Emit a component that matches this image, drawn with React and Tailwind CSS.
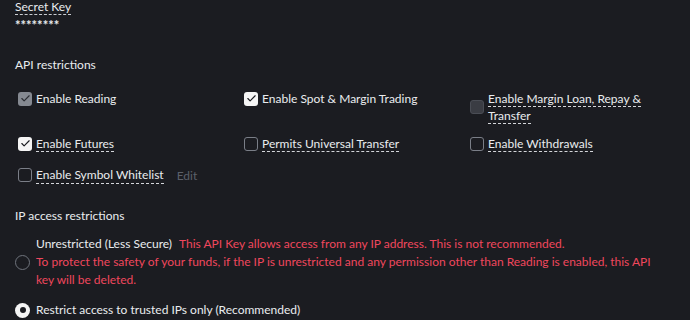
import { Check } from "lucide-react";

const permissions = [
  { label: "Enable Reading", state: "locked" },
  { label: "Enable Spot & Margin Trading", state: "on" },
  { label: "Enable Margin Loan, Repay & Transfer", state: "disabled", dashed: true, center: true },
  { label: "Enable Futures", state: "on", dashed: true },
  { label: "Permits Universal Transfer", state: "off", dashed: true },
  { label: "Enable Withdrawals", state: "off", dashed: true },
];

function Box({ state }) {
  if (state === "locked")
    return (
      <span className="flex h-[14px] w-[14px] shrink-0 items-center justify-center rounded-[3px] bg-[#858991]">
        <Check size={11} strokeWidth={2.5} className="text-[#2b2d33]" />
      </span>
    );
  if (state === "on")
    return (
      <span className="flex h-[14px] w-[14px] shrink-0 items-center justify-center rounded-[3px] bg-[#f5f5f5]">
        <Check size={11} strokeWidth={2.5} className="text-[#1b1c21]" />
      </span>
    );
  if (state === "disabled")
    return <span className="h-[14px] w-[14px] shrink-0 rounded-[3px] border border-[#4a4d55] bg-[#3a3c43]" />;
  return <span className="h-[14px] w-[14px] shrink-0 rounded-[3px] border border-[#7a7e87]" />;
}

function Label({ children, dashed }) {
  if (!dashed) return <span>{children}</span>;
  return <span className="border-b border-dashed border-[#d4d6da]">{children}</span>;
}

export default function App() {
  return (
    <div className="h-[320px] w-[690px] overflow-hidden bg-[#1b1c21] pl-[15px] text-[12px] text-[#eaecef] font-['Lato',_'Open_Sans',_sans-serif]">
      <div className="-mt-[1px] leading-[15px]">
        <span className="border-b border-dashed border-[#c9ccd1]">Secret Key</span>
      </div>
      <div className="mt-[4px] text-[13px] font-bold leading-[14px]">********</div>

      <div className="mt-[24px] leading-[18px]">API restrictions</div>

      <div className="mt-[16px] ml-[3px] grid grid-cols-[226px_226px_200px] gap-y-[11px] leading-[17px]">
        {permissions.map((p) => (
          <div key={p.label} className={"flex gap-[4px] " + (p.center ? "items-center" : "items-start")}>
            <span className="flex h-[17px] items-center">
              <Box state={p.state} />
            </span>
            <span className="w-[170px]">
              <Label dashed={p.dashed}>{p.label}</Label>
            </span>
          </div>
        ))}
        <div className="col-span-3 mt-[3px] flex items-center gap-[4px]">
          <Box state="off" />
          <Label dashed>Enable Symbol Whitelist</Label>
          <span className="ml-[9px] text-[#5c606a]">Edit</span>
        </div>
      </div>

      <div className="mt-[23px] leading-[18px]">IP access restrictions</div>

      <div className="mt-[10px] flex items-center">
        <span className="h-[15px] w-[15px] shrink-0 rounded-full border border-[#6f737c]" />
        <div className="ml-[6px] w-[615px] leading-[18px]">
          <div>
            Unrestricted (Less Secure)
            <span className="ml-[7px] text-[#f0475d]">
              This API Key allows access from any IP address. This is not recommended.
            </span>
          </div>
          <div className="text-[#f0475d]">
            To protect the safety of your funds, if the IP is unrestricted and any permission other than Reading is enabled, this API key will be deleted.
          </div>
        </div>
      </div>

      <div className="mt-[12px] flex items-center leading-[18px]">
        <span className="flex h-[15px] w-[15px] shrink-0 items-center justify-center rounded-full bg-[#f5f5f5]">
          <span className="h-[6px] w-[6px] rounded-full bg-[#1b1c21]" />
        </span>
        <span className="ml-[6px]">Restrict access to trusted IPs only (Recommended)</span>
      </div>
    </div>
  );
}
